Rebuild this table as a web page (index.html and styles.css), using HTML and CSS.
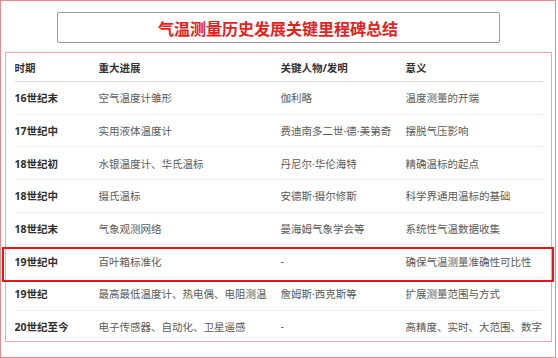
FILE: index.html
```html
<!DOCTYPE html>
<html lang="zh">
<head>
<meta charset="utf-8">
<link rel="stylesheet" href="styles.css">
</head>
<body>
<div class="frame">
  <div class="title-box"><h1 class="title">气温测量历史发展关键里程碑总结</h1></div>
  <div class="card">
    <div class="row head">
      <div>时期</div><div>重大进展</div><div>关键人物/发明</div><div>意义</div>
    </div>
    <div class="row"><div class="era">16世纪末</div><div>空气温度计雏形</div><div>伽利略</div><div>温度测量的开端</div></div>
    <div class="row"><div class="era">17世纪中</div><div>实用液体温度计</div><div>费迪南多二世·德·美第奇</div><div>摆脱气压影响</div></div>
    <div class="row"><div class="era">18世纪初</div><div>水银温度计、华氏温标</div><div>丹尼尔·华伦海特</div><div>精确温标的起点</div></div>
    <div class="row"><div class="era">18世纪中</div><div>摄氏温标</div><div>安德斯·摄尔修斯</div><div>科学界通用温标的基础</div></div>
    <div class="row"><div class="era">18世纪末</div><div>气象观测网络</div><div>曼海姆气象学会等</div><div>系统性气温数据收集</div></div>
    <div class="row marked"><div class="era">19世纪中</div><div>百叶箱标准化</div><div>-</div><div>确保气温测量准确性可比性</div></div>
    <div class="row"><div class="era">19世纪</div><div>最高最低温度计、热电偶、电阻测温</div><div>詹姆斯·西克斯等</div><div>扩展测量范围与方式</div></div>
    <div class="row last"><div class="era">20世纪至今</div><div>电子传感器、自动化、卫星遥感</div><div>-</div><div>高精度、实时、大范围、数字</div></div>
  </div>
</div>
</body>
</html>
```

FILE: styles.css
```css
* { box-sizing: border-box; }
html, body { margin: 0; padding: 0; background: #fff; }
body {
  font-family: "Noto Sans", "Noto Sans CJK SC", sans-serif;
  width: 558px;
  height: 358px;
  overflow: hidden;
}
.frame {
  width: 556px;
  height: 358px;
  border: 1.5px solid #ec8a8a;
  padding-top: 11px;
  display: flex;
  flex-direction: column;
  align-items: center;
}
.title-box {
  width: 443px;
  height: 31px;
  border: 1px solid #9c9c9c;
  border-radius: 2px;
  display: flex;
  align-items: center;
  justify-content: center;
}
.title {
  margin: 0;
  font-family: "Noto Sans CJK SC", sans-serif;
  font-size: 16px;
  font-weight: 700;
  color: #e8201c;
  line-height: 1;
}
.card {
  margin-top: 9px;
  width: 547px;
  height: 290px;
  border: 1px solid #f2a6a6;
  padding: 0 8px 0 9px;
  align-self: flex-start;
  margin-left: 3.5px;
}
.row {
  display: grid;
  grid-template-columns: 84px 182px 125px 137px;
  height: 32.7px;
  align-items: center;
  border-bottom: 1px solid #efefef;
  font-size: 10.5px;
  color: #5a5a5a;
  white-space: nowrap;
}
.row > div { overflow: hidden; }
.row.head {
  height: 29px;
  border-bottom-color: #dcdcdc;
  font-weight: 700;
  color: #333;
}
.row .era {
  font-weight: 700;
  color: #2e2e2e;
}
.row.last { border-bottom: none; height: 31px; }
.row.marked { position: relative; }
.row.marked::after {
  content: "";
  position: absolute;
  left: -13px;
  right: -11px;
  top: 2px;
  height: 31px;
  border: 2px solid #e41818;
  pointer-events: none;
}
```
